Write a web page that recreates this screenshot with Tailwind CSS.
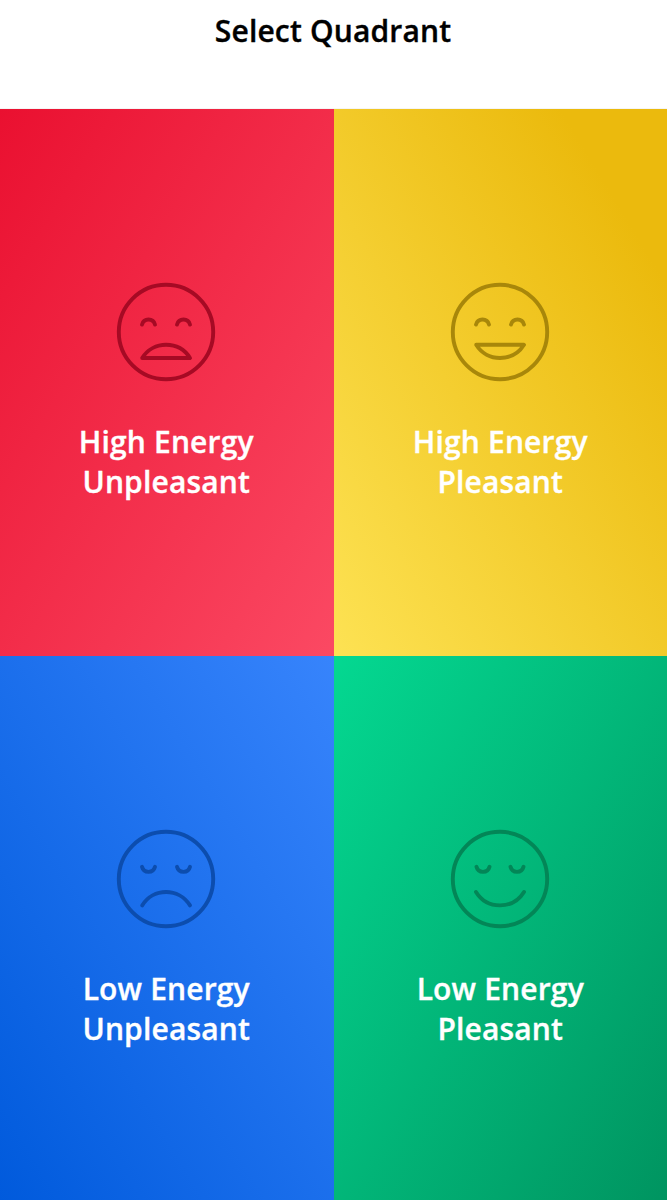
<!DOCTYPE html>
<html lang="en">

<head>
  <meta charset="UTF-8" />
  <meta name="viewport" content="width=device-width, initial-scale=1.0" />
  <title>Select Quadrant</title>
  <script src="https://cdn.jsdelivr.net/npm/@tailwindcss/browser@4"></script>
</head>

<body class="bg-white h-[1200px] overflow-hidden font-['Open_Sans','Noto_Sans',sans-serif] font-semibold text-[30px] leading-10 tracking-[0.16px] [-webkit-text-stroke:0.35px]">

  <header class="h-[109px] pt-[11px] pr-px text-center text-black border-b border-neutral-100">
    <h1>Select Quadrant</h1>
  </header>

  <main class="grid grid-cols-2 auto-rows-[547px] text-white text-center">
    <section class="flex flex-col items-center pt-[163px] pr-px gap-[30px] bg-[linear-gradient(to_bottom_right,#ea1030,#fb4963)]">
      <svg class="size-[120px] shrink-0" viewBox="0 0 120 120" fill="none" stroke="#a60a24" stroke-width="3.9" stroke-linecap="round" stroke-linejoin="round">
        <circle cx="60" cy="60" r="47.2" />
        <path d="M36 52.6A6.7 6.7 0 0 1 49 52.6M71 52.6A6.7 6.7 0 0 1 84 52.6" />
        <path d="M36.2 86C47 68.4 73 68.4 84 86Z" />
      </svg>
      <h2>High Energy<br>Unpleasant</h2>
    </section>

    <section class="flex flex-col items-center pt-[163px] gap-[30px] bg-[linear-gradient(to_top_right,#fde253,#ebba0d_84%)]">
      <svg class="size-[120px] shrink-0" viewBox="0 0 120 120" fill="none" stroke="#a8870a" stroke-width="3.9" stroke-linecap="round" stroke-linejoin="round">
        <circle cx="60" cy="60" r="47.2" />
        <path d="M36 52.6A6.7 6.7 0 0 1 49 52.6M71 52.6A6.7 6.7 0 0 1 84 52.6" />
        <path d="M36.2 72.8C47 90.4 73 90.4 84 72.8Z" />
      </svg>
      <h2>High Energy<br>Pleasant</h2>
    </section>

    <section class="flex flex-col items-center pt-[163px] pr-px gap-[30px] bg-[linear-gradient(to_top_right,#005adc,#3784fc)]">
      <svg class="size-[120px] shrink-0" viewBox="0 0 120 120" fill="none" stroke="#0c4dae" stroke-width="3.9" stroke-linecap="round" stroke-linejoin="round">
        <circle cx="60" cy="60" r="47.2" />
        <path d="M36 47.8A6.7 6.7 0 0 0 49 47.8M71 47.8A6.7 6.7 0 0 0 84 47.8" />
        <path d="M36.2 86.4C47 68.6 73 68.6 84 86.4" />
      </svg>
      <h2>Low Energy<br>Unpleasant</h2>
    </section>

    <section class="flex flex-col items-center pt-[163px] gap-[30px] bg-[linear-gradient(to_bottom_right,#04d891,#009460)]">
      <svg class="size-[120px] shrink-0" viewBox="0 0 120 120" fill="none" stroke="#038657" stroke-width="3.9" stroke-linecap="round" stroke-linejoin="round">
        <circle cx="60" cy="60" r="47.2" />
        <path d="M36.5 47.8A6.7 6.7 0 0 0 49.5 47.8M70.5 47.8A6.7 6.7 0 0 0 83.5 47.8" />
        <path d="M36 73C47 90.8 73 90.8 84 73" />
      </svg>
      <h2>Low Energy<br>Pleasant</h2>
    </section>
  </main>

</body>

</html>
